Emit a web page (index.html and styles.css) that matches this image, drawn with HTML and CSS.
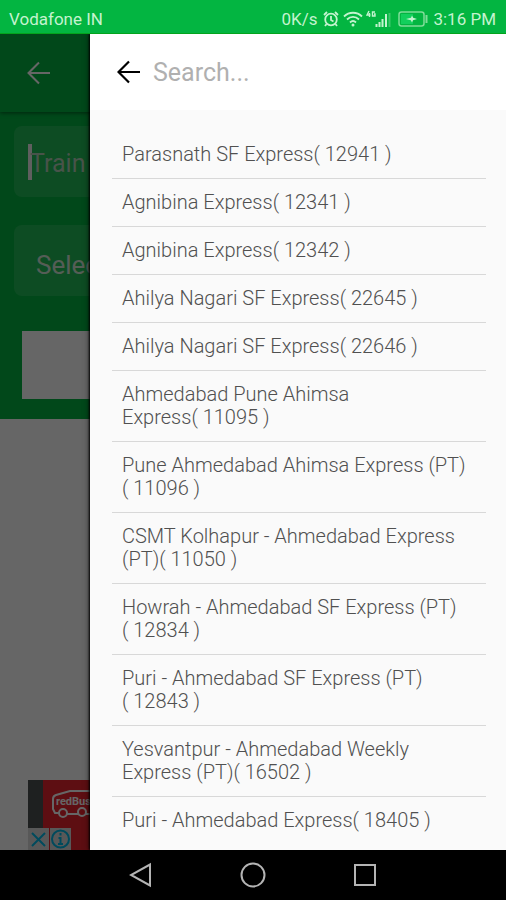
FILE: index.html
```html
<!DOCTYPE html>
<html lang="en">
<head>
    <meta charset="UTF-8">
    <meta name="viewport" content="width=device-width, initial-scale=1.0">
    <title>Search Train</title>
    <link rel="stylesheet" href="styles.css">
</head>
<body>
    <header class="status-bar">
        <span class="carrier">Vodafone IN</span>
        <span>0K/s</span>
        <svg class="alarm" width="16" height="16" viewBox="0 0 16 16" fill="none" stroke="currentColor" stroke-width="1.8">
            <circle cx="8" cy="8.5" r="5.8"/>
            <path d="M8 5v4l2.5 1.5M1 4l3-3M15 4l-3-3M3.5 13l-1.5 2M12.5 13l1.5 2"/>
        </svg>
        <svg class="wifi" width="20" height="16" viewBox="0 0 20 16" fill="none" stroke="currentColor" stroke-width="1.8">
            <path d="M1 5.5c5-5 13-5 18 0M4 8.5c3.500-3.500 8.500-3.500 12 0M7 11.500c2-2 4-2 6 0"/>
            <circle cx="10" cy="14" r="1.5" fill="currentColor" stroke="none"/>
        </svg>
        <svg class="signal" width="25" height="18" viewBox="0 0 25 18" fill="none" stroke="currentColor">
            <path d="M3 1L1 5h3.500M3.500 3v4M9 2H6.500v4H9V4H8" stroke-width="1.4"/>
            <path d="M10.500 17v-3M13.500 17v-5M16.500 17v-8M20 17V4" stroke-width="2"/>
            <path d="M23.500 17V3" stroke-width="2" opacity="0.3"/>
        </svg>
        <svg class="battery" width="30" height="16" viewBox="0 0 30 16" fill="none" stroke="currentColor" stroke-width="1.5">
            <rect x="1" y="1" width="25" height="14" rx="2.5" stroke="#7fdc98"/>
            <rect x="3" y="3" width="12" height="10" fill="#12cf5c" stroke="none"/>
            <path d="M28.500 4v8" stroke="#7fdc98" stroke-width="2"/>
            <path d="M8 8l5-1.200 1-2.300 1.200 2.300L19 8l-4 1.200-1 2.300-1.200-2.300z" fill="currentColor" stroke="none"/>
        </svg>
        <span>3:16 PM</span>
    </header>

    <div class="screen">
        <main class="page">
            <div class="toolbar">
                <button class="icon-button" aria-label="Back">
                    <svg width="24" height="24" viewBox="0 0 24 24" fill="none" stroke="currentColor" stroke-width="2">
                        <path d="M23 12H2M12 1.500L1.500 12 12 22.500"/>
                    </svg>
                </button>
            </div>
            <form class="train-form">
                <div class="train-field">
                    <span class="caret"></span>
                    <input class="train-input" type="text" placeholder="Train" aria-label="Train">
                </div>
                <select class="date-select" aria-label="Select">
                    <option>Select</option>
                </select>
                <button class="submit" type="button" aria-label="Submit"></button>
            </form>
            <div class="ad">
                <svg class="bus" width="48" height="30" viewBox="0 0 48 30" fill="none" stroke="#fff" stroke-width="2">
                    <path d="M7 23H3L1 19V9Q1 6 4 5L18 1h20M15 24h11M34 24h13"/>
                    <circle cx="11" cy="23" r="4"/>
                    <circle cx="30" cy="22" r="4"/>
                    <text class="bus-text" x="4" y="15">redBus</text>
                </svg>
                <div class="ad-badges">
                    <svg width="21" height="22" viewBox="0 0 21 22" fill="none" stroke="#00b8e6" stroke-width="2">
                        <path d="M4 5l13 13M17 5L4 18"/>
                    </svg>
                    <svg width="21" height="22" viewBox="0 0 21 22" fill="none" stroke="#00b8e6" stroke-width="2">
                        <circle cx="10.500" cy="11" r="8.500"/>
                        <path d="M10.500 5v2.500M8.500 10h2v6M8 16h5"/>
                    </svg>
                </div>
            </div>
        </main>

        <div class="scrim"></div>

        <section class="drawer">
            <div class="search-bar">
                <button class="icon-button" aria-label="Close search">
                    <svg width="24" height="24" viewBox="0 0 24 24" fill="none" stroke="currentColor" stroke-width="2.2">
                        <path d="M23 12H2M12 1.500L1.500 12 12 22.500"/>
                    </svg>
                </button>
                <input class="search-input" type="text" placeholder="Search..." aria-label="Search">
            </div>
            <ul class="train-list">
                <li>Parasnath SF Express(&nbsp;12941&nbsp;)</li>
                <li>Agnibina Express(&nbsp;12341&nbsp;)</li>
                <li>Agnibina Express(&nbsp;12342&nbsp;)</li>
                <li>Ahilya Nagari SF Express(&nbsp;22645&nbsp;)</li>
                <li>Ahilya Nagari SF Express(&nbsp;22646&nbsp;)</li>
                <li>Ahmedabad Pune Ahimsa Express(&nbsp;11095&nbsp;)</li>
                <li>Pune Ahmedabad Ahimsa Express (PT)<wbr>(&nbsp;11096&nbsp;)</li>
                <li>CSMT Kolhapur - Ahmedabad Express (PT)(&nbsp;11050&nbsp;)</li>
                <li>Howrah - Ahmedabad SF Express (PT)<wbr>(&nbsp;12834&nbsp;)</li>
                <li>Puri - Ahmedabad SF Express (PT)<wbr>(&nbsp;12843&nbsp;)</li>
                <li>Yesvantpur - Ahmedabad Weekly Express (PT)(&nbsp;16502&nbsp;)</li>
                <li>Puri - Ahmedabad Express(&nbsp;18405&nbsp;)</li>
            </ul>
        </section>
    </div>

    <nav class="nav-bar">
        <button class="nav-button" aria-label="Back">
            <svg width="24" height="26" viewBox="0 0 24 26" fill="none" stroke="currentColor" stroke-width="2">
                <path d="M21 2.500v21L2 13z"/>
            </svg>
        </button>
        <button class="nav-button" aria-label="Home">
            <svg width="26" height="26" viewBox="0 0 26 26" fill="none" stroke="currentColor" stroke-width="2">
                <circle cx="13" cy="13" r="11.500"/>
            </svg>
        </button>
        <button class="nav-button" aria-label="Recent apps">
            <svg width="24" height="26" viewBox="0 0 24 26" fill="none" stroke="currentColor" stroke-width="2">
                <rect x="2" y="3" width="20" height="20"/>
            </svg>
        </button>
    </nav>
</body>
</html>
```
FILE: styles.css
```css
* {
    box-sizing: border-box;
}
body {
    margin: 0;
    height: 100vh;
    display: flex;
    flex-direction: column;
    overflow: hidden;
    font-family: Roboto, sans-serif;
    background: #000;
}
button, input, select {
    font-family: inherit;
    color: inherit;
    border: none;
    background: none;
    padding: 0;
    margin: 0;
}

/* status bar */
.status-bar {
    display: flex;
    align-items: center;
    flex-shrink: 0;
    height: 34px;
    padding: 4px 10px 0 9px;
    background: #03b541;
    border-bottom: 1px solid #04a41c;
    color: #c4f3cf;
    font-size: 17px;
}
.carrier {
    flex: 1;
}
.alarm {
    margin-left: 6px;
}
.wifi {
    margin-left: 4px;
}
.signal {
    margin-left: 3px;
}
.battery {
    margin: 0 5px 0 7px;
}

.screen {
    position: relative;
    flex: 1;
    min-height: 0;
    overflow: hidden;
    background: #fff;
}

/* page under the drawer */
.page {
    display: flex;
    flex-direction: column;
    height: 100%;
    isolation: isolate;
}
.toolbar {
    display: flex;
    align-items: center;
    flex-shrink: 0;
    height: 78px;
    padding-left: 27px;
    background: #03b541;
    color: #fff;
    box-shadow: 0 1px 4px rgba(0, 0, 0, 0.5);
    z-index: 1;
}
.icon-button {
    display: flex;
    cursor: pointer;
}
.train-form {
    display: flex;
    flex-direction: column;
    padding: 14px 14px 20px;
    background: #03b541;
}
.train-field, .date-select {
    height: 71px;
    border-radius: 8px;
    background: rgba(255, 255, 255, 0.12);
    color: #d5e8d8;
    font-size: 26px;
}
.train-field {
    display: flex;
    align-items: center;
    padding-left: 14px;
    margin-bottom: 28px;
}
.caret {
    width: 4px;
    height: 36px;
    margin-right: -2px;
    background: #eee;
}
.train-input {
    flex: 1;
    min-width: 0;
    padding-top: 4px;
    font-size: 25px;
}
.train-input::placeholder {
    color: #b4d0b9;
}
.date-select {
    appearance: none;
    padding: 8px 0 0 22px;
    margin-bottom: 35px;
}
.submit {
    height: 68px;
    margin: 0 8px;
    background: #fff;
}
.ad {
    display: flex;
    flex-direction: column;
    justify-content: space-between;
    height: 70px;
    margin: auto 28px 0;
    background: #e8232f;
    border-left: 15px solid #4c5250;
}
.bus {
    margin: 10px 0 0 9px;
}
.bus-text {
    font: bold 11px Roboto, sans-serif;
    fill: #fff;
    stroke: none;
}
.ad-badges {
    display: flex;
    gap: 1px;
    margin-left: -15px;
}
.ad-badges svg {
    background: #ddd;
}

.scrim {
    position: absolute;
    inset: 0;
    background: rgba(0, 0, 0, 0.6);
}

/* search drawer */
.drawer {
    position: absolute;
    top: 0;
    right: 0;
    bottom: 0;
    left: 90px;
    overflow: hidden;
    background: #fafafa;
    box-shadow: -1px 0 2px #000, -2px 0 6px rgba(0, 0, 0, 0.3);
}
.search-bar {
    display: flex;
    align-items: center;
    height: 76px;
    padding: 0 20px 0 27px;
    background: #fff;
    color: #000;
}
.search-input {
    flex: 1;
    min-width: 0;
    margin-left: 12px;
    font-size: 25px;
}
.search-input::placeholder {
    color: #b0b0b0;
}
.train-list {
    list-style: none;
    margin: 0;
    padding: 21px 20px 0 22px;
}
.train-list li {
    padding: 12px 10px;
    border-bottom: 1px solid #d8d8d8;
    color: #505050;
    font-size: 20px;
    font-weight: 300;
    line-height: 23px;
}
.train-list li:last-child {
    border-bottom: none;
}

/* android navigation */
.nav-bar {
    display: flex;
    align-items: center;
    justify-content: center;
    gap: 87px;
    flex-shrink: 0;
    height: 50px;
    background: #000;
}
.nav-button {
    display: flex;
    color: #b4b4b4;
    cursor: pointer;
}
```
